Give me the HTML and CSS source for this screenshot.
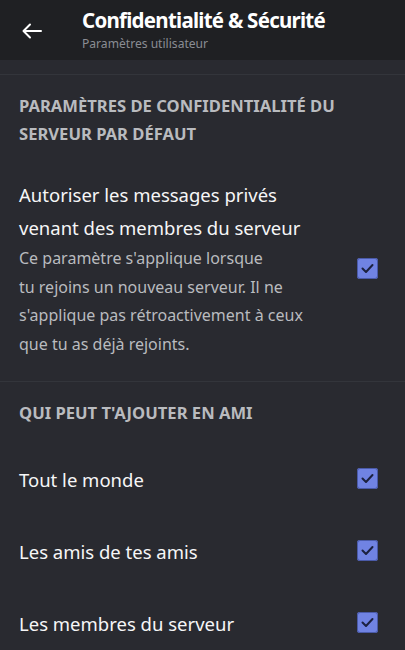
FILE: index.html
```html
<!DOCTYPE html>
<html lang="fr">
<head>
<meta charset="utf-8">
<title>Confidentialité &amp; Sécurité</title>
<link rel="stylesheet" href="styles.css">
</head>
<body>
<header class="topbar">
  <button class="back" aria-label="Retour">
    <svg width="20" height="16" viewBox="0 0 20 16" fill="none" stroke="#ffffff" stroke-width="2" stroke-linecap="round" stroke-linejoin="round">
      <path d="M19 8H2"/>
      <path d="M8 1.5L1.5 8L8 14.5"/>
    </svg>
  </button>
  <div class="titles">
    <h1 class="title">Confidentialité &amp; Sécurité</h1>
    <div class="subtitle">Paramètres utilisateur</div>
  </div>
</header>
<main class="content">
  <section class="section first">
    <h2 class="section-title">Paramètres de confidentialité du<br>serveur par défaut</h2>
    <div class="row tall">
      <div class="row-text">
        <div class="label">Autoriser les messages privés<br>venant des membres du serveur</div>
        <div class="desc">Ce paramètre s'applique lorsque<br>tu rejoins un nouveau serveur. Il ne<br>s'applique pas rétroactivement à ceux<br>que tu as déjà rejoints.</div>
      </div>
      <span class="check"><svg width="21" height="21" viewBox="0 0 21 21" fill="none" stroke="#1c2140" stroke-width="2" stroke-linecap="round" stroke-linejoin="round"><path d="M5.5 10.5l3.5 3.5 6.5-7"/></svg></span>
    </div>
  </section>
  <section class="section">
    <h2 class="section-title">Qui peut t'ajouter en ami</h2>
    <div class="rows">
      <div class="row item">
        <div class="label">Tout le monde</div>
        <span class="check"><svg width="21" height="21" viewBox="0 0 21 21" fill="none" stroke="#1c2140" stroke-width="2" stroke-linecap="round" stroke-linejoin="round"><path d="M5.5 10.5l3.5 3.5 6.5-7"/></svg></span>
      </div>
      <div class="row item">
        <div class="label">Les amis de tes amis</div>
        <span class="check"><svg width="21" height="21" viewBox="0 0 21 21" fill="none" stroke="#1c2140" stroke-width="2" stroke-linecap="round" stroke-linejoin="round"><path d="M5.5 10.5l3.5 3.5 6.5-7"/></svg></span>
      </div>
      <div class="row item">
        <div class="label">Les membres du serveur</div>
        <span class="check"><svg width="21" height="21" viewBox="0 0 21 21" fill="none" stroke="#1c2140" stroke-width="2" stroke-linecap="round" stroke-linejoin="round"><path d="M5.5 10.5l3.5 3.5 6.5-7"/></svg></span>
      </div>
    </div>
  </section>
</main>
</body>
</html>
```
FILE: styles.css
```css
* { box-sizing: border-box; }
html, body { margin: 0; padding: 0; }
body {
  width: 405px;
  height: 650px;
  overflow: hidden;
  background: #292a30;
  font-family: "Noto Sans", "Open Sans", sans-serif;
  color: #ffffff;
}
.topbar {
  height: 60px;
  background: #1f2023;
  display: flex;
  align-items: flex-start;
}
.back {
  background: none;
  border: 0;
  padding: 0;
  margin: 23px 0 0 22px;
  width: 20px;
  height: 16px;
  display: flex;
}
.titles {
  margin-left: 40px;
  padding-top: 7px;
}
.title {
  margin: 0;
  font-size: 20.5px;
  line-height: 26px;
  font-weight: 700;
  color: #ffffff;
  letter-spacing: -0.75px;
}
.subtitle {
  margin-top: 3px;
  font-size: 12.1px;
  line-height: 16px;
  color: #8a8d93;
}
.content {
  margin-top: 14px;
}
.section {
  border-top: 1px solid #33353b;
  padding: 17px 27px 0 19px;
}
.section.first {
  padding-bottom: 22px;
}
.section-title {
  margin: 0;
  font-size: 16.6px;
  line-height: 28px;
  font-weight: 700;
  text-transform: uppercase;
  color: #b9bbbf;
}
.row {
  display: flex;
  align-items: center;
  justify-content: space-between;
}
.row.tall {
  margin-top: 30px;
}
.label {
  font-size: 18.5px;
  line-height: 33px;
  color: #f6f6f7;
}
.item .label {
  padding-top: 2px;
}
.desc {
  font-size: 16px;
  line-height: 28.7px;
  color: #b9bbbf;
}
.rows {
  margin-top: 16px;
}
.item {
  height: 72px;
}
.check {
  width: 21px;
  height: 21px;
  flex: none;
  border-radius: 3px;
  background: #7083e3;
  box-shadow: inset 0 0 0 1px #4a5aa8;
  display: flex;
}
```
